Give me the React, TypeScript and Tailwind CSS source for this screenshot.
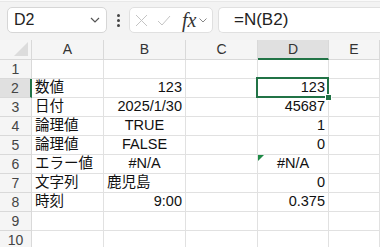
import React from "react";

const font = { fontFamily: '"Liberation Sans", "Noto Sans CJK JP", sans-serif' };

type Cell = { text?: string; align?: "l" | "c" | "r"; err?: boolean };

const cols = ["A", "B", "C", "D", "E"];
const widths = ["w-[72px]", "w-[82px]", "w-[72px]", "w-[71px]", "flex-1"];

const rows: Cell[][] = [
  [{}, {}, {}, {}, {}],
  [{ text: "数値" }, { text: "123", align: "r" }, {}, { text: "123", align: "r" }, {}],
  [{ text: "日付" }, { text: "2025/1/30", align: "r" }, {}, { text: "45687", align: "r" }, {}],
  [{ text: "論理値" }, { text: "TRUE", align: "c" }, {}, { text: "1", align: "r" }, {}],
  [{ text: "論理値" }, { text: "FALSE", align: "c" }, {}, { text: "0", align: "r" }, {}],
  [{ text: "エラー値" }, { text: "#N/A", align: "c" }, {}, { text: "#N/A", align: "c", err: true }, {}],
  [{ text: "文字列" }, { text: "鹿児島" }, {}, { text: "0", align: "r" }, {}],
  [{ text: "時刻" }, { text: "9:00", align: "r" }, {}, { text: "0.375", align: "r" }, {}],
  [{}, {}, {}, {}, {}],
  [{}, {}, {}, {}, {}],
];

function FormulaBar() {
  return (
    <div className="h-10 bg-[#f3f3f3] flex flex-col">
      <div className="h-[2px] bg-[#fafafa] border-b border-[#e8e8e8]" />
      <div className="flex items-center pt-[5px]">
        <div className="ml-[7px] w-[100px] h-[26px] bg-white border border-[#d6d6d6] rounded-[5px] flex items-center justify-between pl-[6px] pr-[6px]">
          <span className="text-[16px] text-[#222]">D2</span>
          <svg width="10" height="6" viewBox="0 0 10 6">
            <path d="M1 1 L5 5 L9 1" fill="none" stroke="#555" strokeWidth="1.2" />
          </svg>
        </div>
        <div className="w-[22px] flex flex-col items-center gap-[2px]">
          <span className="w-[3px] h-[3px] bg-[#444] rounded-full" />
          <span className="w-[3px] h-[3px] bg-[#444] rounded-full" />
          <span className="w-[3px] h-[3px] bg-[#444] rounded-full" />
        </div>
        <div className="w-[84px] h-[26px] bg-white border border-[#e0e0e0] rounded-[5px] flex items-center pl-[5px]">
          <svg width="13" height="13" viewBox="0 0 13 13">
            <path d="M1 1 L12 12 M12 1 L1 12" stroke="#c4c4c4" strokeWidth="1" />
          </svg>
          <svg width="14" height="11" viewBox="0 0 14 11" className="ml-[9px]">
            <path d="M1 6 L5 10 L13 1" fill="none" stroke="#c4c4c4" strokeWidth="1" />
          </svg>
          <span className="ml-[11px] text-[20px] italic text-[#333] leading-none" style={{ fontFamily: '"Liberation Serif", serif' }}>
            fx
          </span>
          <svg width="8" height="5" viewBox="0 0 8 5" className="ml-[3px]">
            <path d="M0.5 0.5 L4 4 L7.5 0.5" fill="none" stroke="#888" strokeWidth="1" />
          </svg>
        </div>
        <div className="ml-[5px] flex-1 h-[26px] bg-white border border-[#e0e0e0] rounded-l-[5px] border-r-0 flex items-center pl-[15px]">
          <span className="text-[17px] text-[#222]">=N(B2)</span>
        </div>
      </div>
    </div>
  );
}

function Header() {
  return (
    <div className="flex h-5 bg-[#f5f5f5] text-[14px] text-[#333]">
      <div className="w-8 relative border-r border-b border-[#d9d9d9]">
        <svg width="14" height="14" viewBox="0 0 14 14" className="absolute right-[3px] bottom-[3px]">
          <path d="M14 0 L14 14 L0 14 Z" fill="#dcdcdc" />
        </svg>
      </div>
      {cols.map((c, i) => (
        <div
          key={c}
          className={`${widths[i]} flex items-center justify-center border-r border-[#d9d9d9] ${
            c === "D" ? "bg-[#e0e0e0] border-b-2 border-b-[#217346]" : "border-b"
          }`}
        >
          {c}
        </div>
      ))}
    </div>
  );
}

export default function App() {
  return (
    <div className="w-[380px] h-[247px] overflow-hidden bg-white" style={font}>
      <FormulaBar />
      <Header />
      {rows.map((r, ri) => (
        <div key={ri} className="flex h-[19px]">
          <div
            className={`w-8 flex items-center justify-center text-[14px] text-[#444] border-b border-[#d9d9d9] ${
              ri === 1 ? "bg-[#e0e0e0] border-r-2 border-r-[#217346]" : "bg-[#f5f5f5] border-r"
            }`}
          >
            {ri + 1}
          </div>
          {r.map((cell, ci) => (
            <div
              key={ci}
              className={`${widths[ci]} relative flex items-center border-r border-b border-[#e1e1e1] px-[3px] text-[14.5px] text-[#111] whitespace-nowrap ${
                cell.align === "r" ? "justify-end" : cell.align === "c" ? "justify-center" : "justify-start"
              }`}
            >
              {cell.err && (
                <svg width="6" height="6" viewBox="0 0 6 6" className="absolute left-0 top-0">
                  <path d="M0 0 L6 0 L0 6 Z" fill="#1e8a46" />
                </svg>
              )}
              {cell.text}
              {ri === 1 && ci === 3 && (
                <div className="absolute z-10 -left-[2px] -top-[2px] -right-[1px] -bottom-[1px] border-2 border-[#217346]">
                  <div className="absolute -right-[5px] -bottom-[5px] w-[7px] h-[7px] bg-[#217346] border border-white" />
                </div>
              )}
            </div>
          ))}
        </div>
      ))}
    </div>
  );
}
